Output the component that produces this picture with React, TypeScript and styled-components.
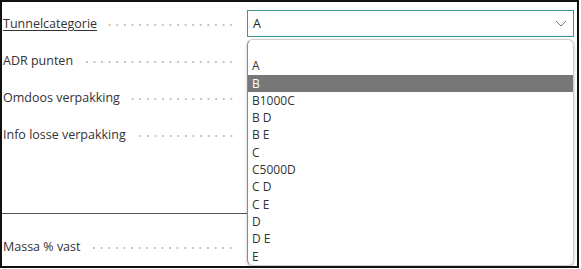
import React, { useState } from 'react'
import styled, { createGlobalStyle } from 'styled-components'

const GlobalStyle = createGlobalStyle`
    body {
        margin: 0;
        background: #fff;
        font-family: 'Open Sans', 'Noto Sans', sans-serif;
    }
`

const Frame = styled.div`
    position: relative;
    box-sizing: border-box;
    width: 579px;
    height: 268px;
    border: 2px solid #111;
    padding-top: 3px;
    overflow: hidden;
`

const Row = styled.div`
    display: grid;
    grid-template-columns: 233px 327px;
    column-gap: 12px;
    align-items: center;
    height: 37px;
`

const LabelCell = styled.div`
    display: flex;
    align-items: center;
    padding-left: 1px;
    min-width: 0;
`

const Label = styled.span<{ $link?: boolean }>`
    font-size: 12.5px;
    color: #333;
    white-space: nowrap;
    text-decoration: ${(p) => (p.$link ? 'underline' : 'none')};
    text-underline-offset: 2px;
`

const Leader = styled.span`
    flex: 1;
    height: 2px;
    margin: 2px 0 0 10px;
    background-image: radial-gradient(circle, #c4c4c4 0.9px, transparent 1px);
    background-size: 7.6px 2px;
    background-position: right center;
    background-repeat: repeat-x;
`

const Select = styled.div`
    box-sizing: border-box;
    height: 27px;
    display: flex;
    align-items: center;
    justify-content: space-between;
    padding: 0 6px 0 5px;
    border: 1.5px solid #3d9792;
    font-size: 12.5px;
    color: #222;
    background: #fff;
`

const Spacer = styled.div`
    height: 60px;
`

const Divider = styled.hr`
    margin: 0;
    border: none;
    border-top: 1px solid #555;
    width: 260px;
`

const Section = styled.div`
    padding-top: 14px;
`

const Menu = styled.ul`
    position: absolute;
    left: 245px;
    top: 37px;
    width: 327px;
    height: 227px;
    box-sizing: border-box;
    margin: 0;
    padding: 0;
    list-style: none;
    background: #fff;
    border: 1px solid #cfcfcf;
    border-left-color: #8a8a8a;
    border-radius: 6px;
    box-shadow: 0 1px 3px rgba(0, 0, 0, 0.25);
    overflow: hidden;
`

const Option = styled.li<{ $active?: boolean }>`
    height: 17.3px;
    line-height: 17.3px;
    padding-left: 4px;
    font-size: 12px;
    color: ${(p) => (p.$active ? '#fff' : '#333')};
    background: ${(p) => (p.$active ? '#777' : 'transparent')};
`

const options = ['', 'A', 'B', 'B1000C', 'B D', 'B E', 'C', 'C5000D', 'C D', 'C E', 'D', 'D E', 'E']

const Chevron = () => (
    <svg width="12" height="7" viewBox="0 0 12 7" fill="none">
        <path d="M1 1l5 5 5-5" stroke="#777" strokeWidth="1" />
    </svg>
)

const App: React.FC = () => {
    const [value] = useState('A')
    const [hover] = useState('B')

    return (
        <>
            <GlobalStyle />
            <Frame>
                <Row>
                    <LabelCell>
                        <Label $link>Tunnelcategorie</Label>
                        <Leader />
                    </LabelCell>
                    <Select>
                        <span>{value}</span>
                        <Chevron />
                    </Select>
                </Row>
                <Row>
                    <LabelCell>
                        <Label>ADR punten</Label>
                        <Leader />
                    </LabelCell>
                </Row>
                <Row>
                    <LabelCell>
                        <Label>Omdoos verpakking</Label>
                        <Leader />
                    </LabelCell>
                </Row>
                <Row>
                    <LabelCell>
                        <Label>Info losse verpakking</Label>
                        <Leader />
                    </LabelCell>
                </Row>
                <Spacer />
                <Divider />
                <Section>
                    <Row>
                        <LabelCell>
                            <Label>Massa % vast</Label>
                            <Leader />
                        </LabelCell>
                    </Row>
                </Section>
                <Menu>
                    {options.map((o, i) => (
                        <Option key={i} $active={o === hover}>
                            {o || '\u00a0'}
                        </Option>
                    ))}
                </Menu>
            </Frame>
        </>
    )
}

export default App
